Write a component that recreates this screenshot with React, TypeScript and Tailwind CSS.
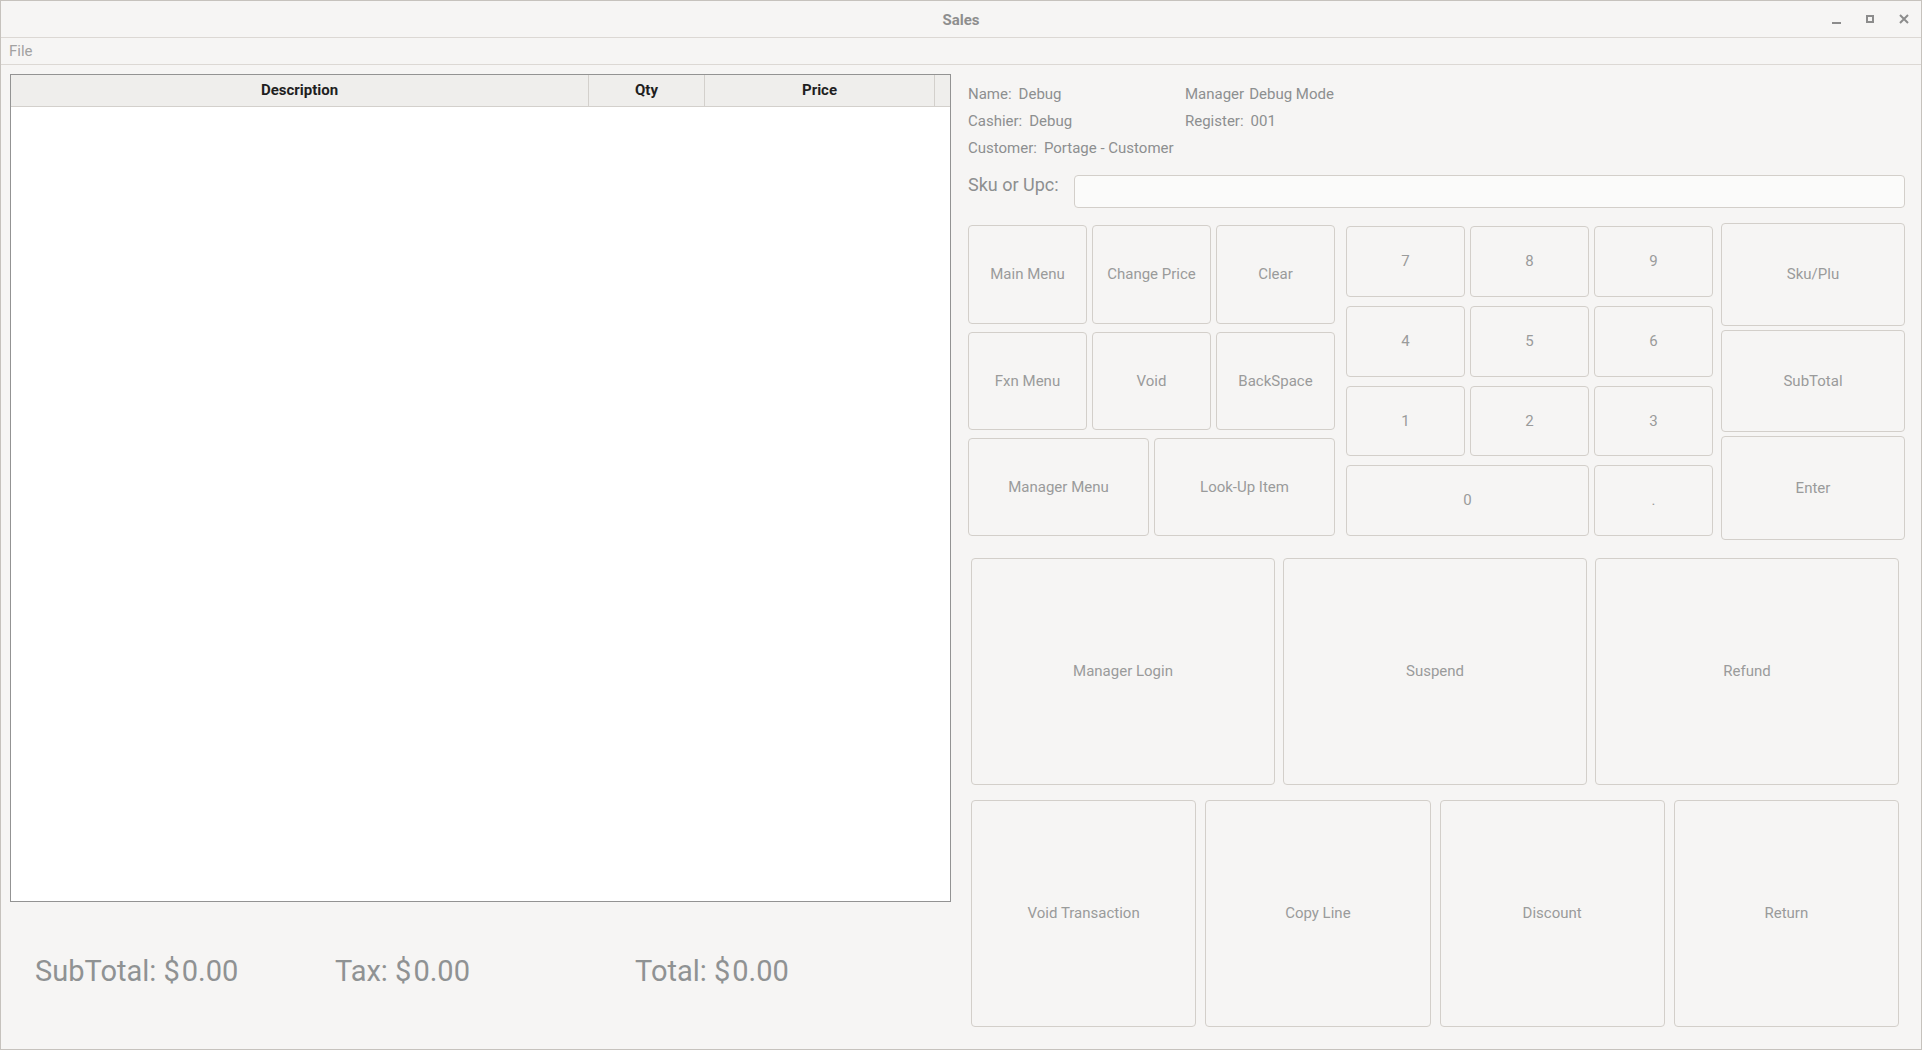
import React from 'react';

const font = { fontFamily: 'Roboto, "Noto Sans", sans-serif' };

const Btn: React.FC<{ label: string; className?: string }> = ({ label, className = '' }) => (
  <div
    className={`flex items-center justify-center rounded-[4px] border border-[#d3cfca] bg-[#f6f5f4] text-[15px] text-[#9a9b9b] ${className}`}
  >
    {label}
  </div>
);

const InfoRow: React.FC<{ label: string; value: string }> = ({ label, value }) => (
  <div className="flex h-[27px] items-center gap-[7px]">
    <span>{label}</span>
    <span>{value}</span>
  </div>
);

const Amount: React.FC<{ label: string }> = ({ label }) => (
  <div className="w-[300px]">
    {label} $<span className="ml-[2px]">0.00</span>
  </div>
);

export default function App() {
  return (
    <div
      style={font}
      className="flex h-[1050px] w-[1922px] flex-col overflow-hidden border border-[#c6c2bd] bg-[#f6f5f4]"
    >
      {/* title bar */}
      <div className="relative flex h-[37px] shrink-0 items-center justify-center border-b border-[#dcd8d4] pt-[3px]">
        <span className="text-[15px] font-bold text-[#8e8e8e]">Sales</span>
        <div className="absolute right-[12px] top-[13px] flex items-start gap-[25px] text-[#8c8c8c]">
          <svg width="9" height="10" viewBox="0 0 9 10">
            <rect x="0" y="8" width="9" height="2" fill="currentColor" />
          </svg>
          <svg width="8" height="10" viewBox="0 0 8 10">
            <rect x="1" y="2" width="6" height="6" fill="none" stroke="currentColor" strokeWidth="2" />
          </svg>
          <svg width="10" height="10" viewBox="0 0 10 10">
            <path d="M1 1 L9 9 M9 1 L1 9" stroke="currentColor" strokeWidth="2" />
          </svg>
        </div>
      </div>

      {/* menu bar */}
      <div className="flex h-[27px] shrink-0 items-center border-b border-[#dcd8d4] px-[8px]">
        <span className="text-[15px] text-[#a2a2a2]">File</span>
      </div>

      <div className="flex min-h-0 flex-1">
        {/* left: item table + totals */}
        <div className="flex w-[950px] shrink-0 flex-col pl-[9px] pt-[9px]">
          <div className="flex h-[828px] flex-col border border-[#939393] bg-white">
            <div className="flex h-[32px] border-b border-[#d3d0cc] bg-[#efeeec] text-[15px] font-bold text-[#1f1f1f]">
              <div className="flex w-[578px] items-center justify-center border-r border-[#d3d0cc]">Description</div>
              <div className="flex w-[116px] items-center justify-center border-r border-[#d3d0cc]">Qty</div>
              <div className="flex w-[230px] items-center justify-center border-r border-[#d3d0cc]">Price</div>
              <div className="flex-1" />
            </div>
          </div>
          <div className="flex flex-1 items-center pb-[8px] pl-[25px] text-[29px] text-[#8f9293]">
            <Amount label="SubTotal:" />
            <Amount label="Tax:" />
            <Amount label="Total:" />
          </div>
        </div>

        {/* right: info + keypad */}
        <div className="flex flex-1 flex-col pl-[17px] pr-[15px] pt-[16px]">
          <div className="flex text-[15px] text-[#8d8f90]">
            <div className="w-[217px]">
              <InfoRow label="Name:" value="Debug" />
              <InfoRow label="Cashier:" value="Debug" />
              <InfoRow label="Customer:" value="Portage - Customer" />
            </div>
            <div>
              <div className="flex h-[27px] items-center gap-[5px]">
                <span>Manager</span>
                <span>Debug Mode</span>
              </div>
              <InfoRow label="Register:" value="001" />
            </div>
          </div>

          <div className="mt-[13px] flex items-start">
            <span className="mt-[-4px] w-[106px] text-[18px] text-[#8d8f90]">Sku or Upc:</span>
            <div className="mr-[1px] h-[33px] flex-1 rounded-[4px] border border-[#d3cfca] bg-[#fbfbfa]" />
          </div>

          <div className="mt-[15px] flex">
            {/* function keys */}
            <div className="mt-[2px] flex w-[367px] flex-col gap-[8px]">
              <div className="flex h-[99px] gap-[5px]">
                <Btn label="Main Menu" className="flex-1" />
                <Btn label="Change Price" className="flex-1" />
                <Btn label="Clear" className="flex-1" />
              </div>
              <div className="flex h-[98px] gap-[5px]">
                <Btn label="Fxn Menu" className="flex-1" />
                <Btn label="Void" className="flex-1" />
                <Btn label="BackSpace" className="flex-1" />
              </div>
              <div className="flex h-[98px] gap-[5px]">
                <Btn label="Manager Menu" className="flex-1" />
                <Btn label="Look-Up Item" className="flex-1" />
              </div>
            </div>

            {/* numpad */}
            <div className="ml-[11px] mt-[3px] grid h-[310px] w-[367px] grid-cols-3 grid-rows-4 gap-x-[5px] gap-y-[9px]">
              {['7', '8', '9', '4', '5', '6', '1', '2', '3'].map((n) => (
                <Btn key={n} label={n} />
              ))}
              <Btn label="0" className="col-span-2" />
              <Btn label="." />
            </div>

            {/* action column */}
            <div className="ml-[8px] flex w-[184px] flex-col gap-[4px]">
              <Btn label="Sku/Plu" className="h-[103px]" />
              <Btn label="SubTotal" className="h-[102px]" />
              <Btn label="Enter" className="h-[104px]" />
            </div>
          </div>

          <div className="ml-[3px] mr-[7px] mt-[18px] flex h-[227px] gap-[8px]">
            <Btn label="Manager Login" className="flex-1" />
            <Btn label="Suspend" className="flex-1" />
            <Btn label="Refund" className="flex-1" />
          </div>

          <div className="ml-[3px] mr-[7px] mt-[15px] flex h-[227px] gap-[9px]">
            <Btn label="Void Transaction" className="flex-1" />
            <Btn label="Copy Line" className="flex-1" />
            <Btn label="Discount" className="flex-1" />
            <Btn label="Return" className="flex-1" />
          </div>
        </div>
      </div>
    </div>
  );
}
